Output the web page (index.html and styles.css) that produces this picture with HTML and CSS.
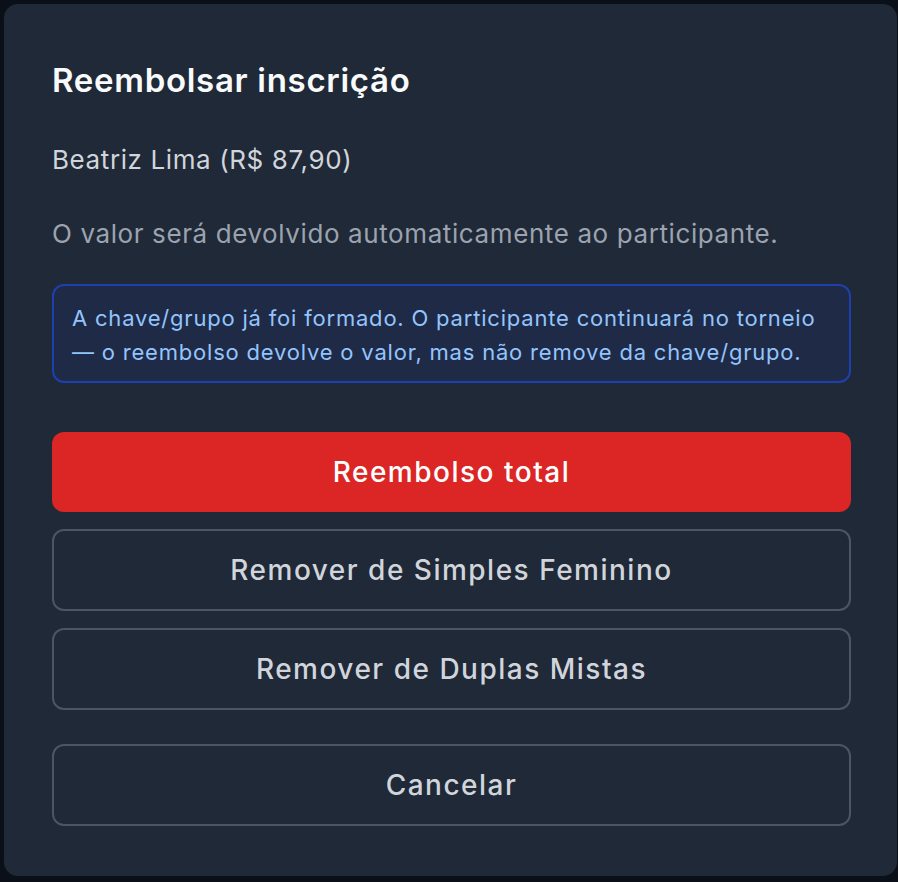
FILE: index.html
```html
<!DOCTYPE html>
<html lang="pt-BR">
<head>
<meta charset="utf-8" />
<title>Reembolsar inscrição</title>
<link rel="stylesheet" href="styles.css">
</head>
<body>
	<div class="modal">
		<h2 class="title">Reembolsar inscrição</h2>
		<p class="who">Beatriz Lima (R$ 87,90)</p>
		<p class="note">O valor será devolvido automaticamente ao participante.</p>
		<div class="info">A chave/grupo já foi formado. O participante continuará no torneio — o reembolso devolve o valor, mas não remove da chave/grupo.</div>
		<div class="actions">
			<button class="btn btn-red">Reembolso total</button>
			<button class="btn btn-line">Remover de Simples Feminino</button>
			<button class="btn btn-line">Remover de Duplas Mistas</button>
		</div>
		<button class="btn btn-line btn-cancel">Cancelar</button>
	</div>
</body>
</html>
```

FILE: styles.css
```css
*{margin:0; padding:0; box-sizing:border-box;}
body{background:#0b0f17; font-family:Inter, "Noto Sans", sans-serif; height:882px; overflow:hidden;}
.modal{margin:4px 1px 0 4px; height:872px; padding:56px 46px 48px 48px; background:#1f2937; border-radius:14px;}
.title{font-size:33px; line-height:40px; font-weight:600; letter-spacing:0.7px; color:#f9fafb;}
.who{margin-top:42px; font-size:26px; line-height:36px; letter-spacing:0.6px; color:#d1d5db;}
.note{margin-top:38px; font-size:26px; line-height:36px; letter-spacing:0.6px; color:#9ca3af;}
.info{margin-top:32px; height:99px; padding:15px 18px 0; border:2px solid #1e40af; border-radius:12px; background:#1f2a47; color:#93c5fd; font-size:22px; line-height:34px; letter-spacing:0.8px;}
.actions{margin-top:49px; display:flex; flex-direction:column; gap:17px;}
.btn{display:block; width:100%; height:82px; border-radius:12px; font-family:inherit; font-size:28px; font-weight:500; letter-spacing:1.5px; cursor:pointer;}
.btn-red{height:80px; border:none; background:#dc2626; color:#fff;}
.btn-line{border:2px solid #4b5563; background:transparent; color:#d1d5db;}
.btn-cancel{margin-top:34px;}
```
